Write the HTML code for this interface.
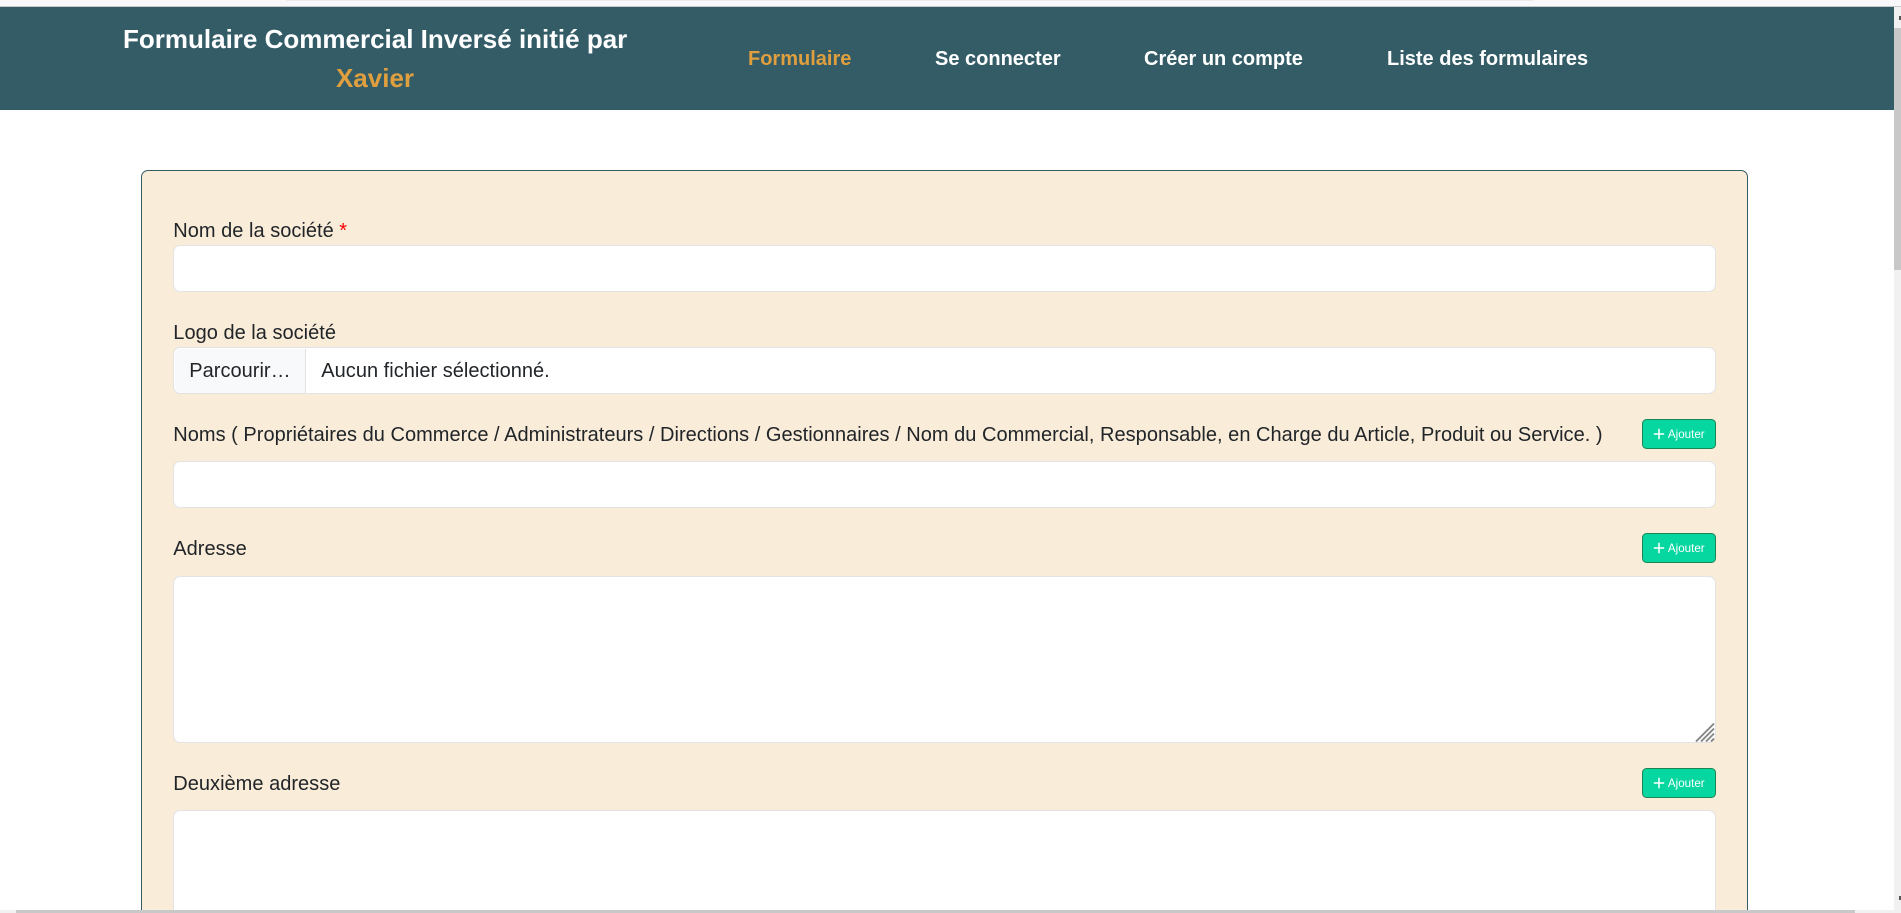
<!DOCTYPE html>
<html lang="fr">
<head>
<meta charset="utf-8">
<title>Formulaire Commercial Inversé</title>
<style>
html,body{margin:0;padding:0;width:1901px;height:913px;overflow:hidden;background:#fff;font-family:"Liberation Sans",Arial,sans-serif;color:#212529}
#page{position:relative;width:1901px;height:913px;overflow:hidden;background:#fff}
.a{position:absolute;white-space:nowrap}
#top{left:0;top:0;width:1901px;height:6px;background:#f8f8fb;border-bottom:1px solid #c9c9cc}
#topin{left:286px;top:0;width:1247px;height:1px;background:#e9e9ee}
#hd{left:0;top:7px;width:1894px;height:103px;background:#335c67}
.nav{top:47px;font-size:20px;line-height:24px;font-weight:700;color:#fff}
.tt{left:123px;width:504px;text-align:center;font-weight:700;font-size:26px;line-height:36px}
#card{left:141px;top:170px;width:1605px;height:743px;box-sizing:content-box;background:#f9ecd8;border:1.2px solid #335c67;border-bottom:0;border-radius:7px 7px 0 0}
.lb,.t{font-size:20px;letter-spacing:.02px;line-height:24px;color:#212529}
.lb{left:173.3px}
.in{left:173.3px;width:1542.4px;box-sizing:border-box;background:#fff;border:1.2px solid #e3e3e6;border-radius:7.2px;margin:0;padding:0;display:block;resize:none;outline:0}
.btn{left:1642.3px;width:73.4px;height:29.8px;box-sizing:border-box;background:#06d6a0;border:1.2px solid #198754;border-radius:4.6px;color:#fff;font-size:11.6px;line-height:29px}
.btn svg{position:absolute;left:9.6px;top:7.6px}
.btn span{position:absolute;left:24.6px;top:0}
</style>
</head>
<body>
<div id="page">
<div class="a" id="top"></div>
<div class="a" id="topin"></div>
<div class="a" id="hd"></div>
<div class="a tt" style="top:21px;color:#fff">Formulaire Commercial Inversé initié par</div>
<div class="a tt" style="top:60px;color:#e09f3e">Xavier</div>
<div class="a nav" style="left:748px;color:#e09f3e">Formulaire</div>
<div class="a nav" style="left:935px">Se connecter</div>
<div class="a nav" style="left:1144px">Créer un compte</div>
<div class="a nav" style="left:1387px">Liste des formulaires</div>

<div class="a" id="card"></div>

<label class="a lb" style="top:218.5px">Nom de la société <span style="color:#f00">*</span></label>
<input class="a in" style="top:245.3px;height:46.4px" type="text">

<label class="a lb" style="top:321px">Logo de la société</label>
<div class="a in" style="top:347.3px;height:46.4px"></div>
<div class="a" style="left:174.5px;top:348.5px;width:131.2px;height:44px;box-sizing:border-box;background:#f8f9fa;border-right:1.2px solid #e3e3e6;border-radius:6px 0 0 6px"></div>
<div class="a t" style="left:189.3px;top:359px">Parcourir…</div>
<div class="a t" style="left:321.3px;top:359px">Aucun fichier sélectionné.</div>

<label class="a lb" style="top:423px">Noms ( Propriétaires du Commerce / Administrateurs / Directions / Gestionnaires / Nom du Commercial, Responsable, en Charge du Article, Produit ou Service. )</label>
<div class="a btn" style="top:419px"><svg width="12" height="12" viewBox="0 0 12 12"><path d="M6 .8v10.4M.8 6h10.4" stroke="#fff" stroke-width="1.5" fill="none"/></svg><span>Ajouter</span></div>
<input class="a in" style="top:461.2px;height:46.4px" type="text">

<label class="a lb" style="top:537px">Adresse</label>
<div class="a btn" style="top:533px"><svg width="12" height="12" viewBox="0 0 12 12"><path d="M6 .8v10.4M.8 6h10.4" stroke="#fff" stroke-width="1.5" fill="none"/></svg><span>Ajouter</span></div>
<textarea class="a in" style="top:575.5px;height:167px"></textarea>
<svg class="a" style="left:1695px;top:722px" width="20" height="20" viewBox="0 0 20 20"><path d="M1 19.5 19 1.5M6 19.5 19 6.5M11 19.5 19 11.5M16 19.5 19 16.5" stroke="#858585" stroke-width="1.9" fill="none"/></svg>

<label class="a lb" style="top:772px">Deuxième adresse</label>
<div class="a btn" style="top:768px"><svg width="12" height="12" viewBox="0 0 12 12"><path d="M6 .8v10.4M.8 6h10.4" stroke="#fff" stroke-width="1.5" fill="none"/></svg><span>Ajouter</span></div>
<textarea class="a in" style="top:810px;height:103px;border-bottom:0;border-radius:7.2px 7.2px 0 0"></textarea>

<div class="a" style="left:1894px;top:7px;width:7px;height:906px;background:#f1f1f1"></div>
<div class="a" style="left:1894px;top:28px;width:7px;height:242px;background:#c8c8c8"></div>
<div class="a" style="left:1899px;top:16px;width:2px;height:4px;background:#555"></div>
<div class="a" style="left:1899px;top:896px;width:2px;height:4px;background:#555"></div>
<div class="a" style="left:0;top:910px;width:1901px;height:3px;background:#f1f1f1"></div>
<div class="a" style="left:16px;top:910px;width:1839px;height:3px;background:#c8c8c8"></div>
</div>
</body>
</html>
